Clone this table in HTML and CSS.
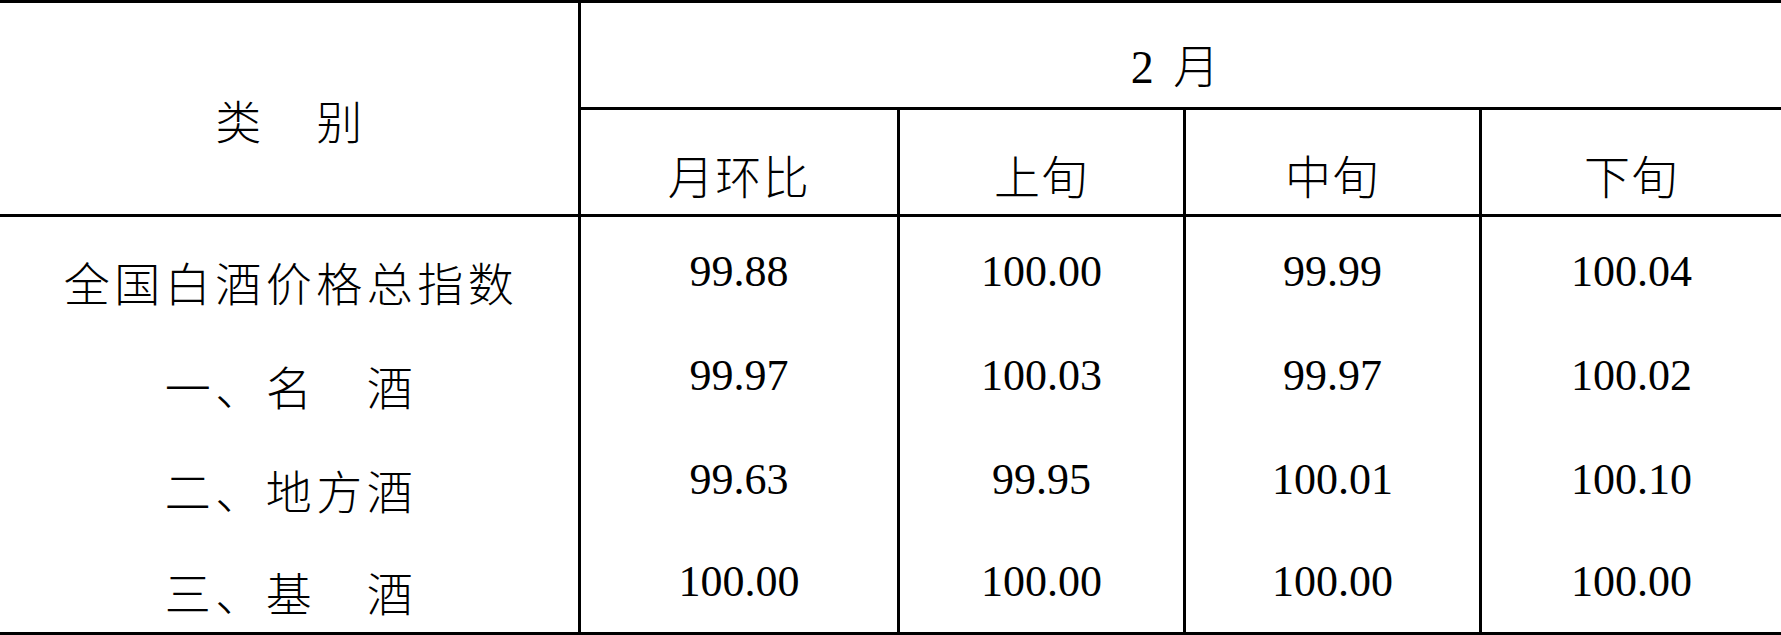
FILE: index.html
```html
<!DOCTYPE html>
<html lang="zh-CN">
<head>
<meta charset="utf-8">
<title>白酒价格指数</title>
<link rel="stylesheet" href="styles.css">
</head>
<body>
<div class="sheet">
  <div class="cell label head-cat">类　别</div>
  <div class="cell month">2 月</div>
  <div class="cell sub">月环比</div>
  <div class="cell sub">上旬</div>
  <div class="cell sub">中旬</div>
  <div class="cell sub last-col">下旬</div>

  <div class="cell label">全国白酒价格总指数</div>
  <div class="cell num">99.88</div>
  <div class="cell num">100.00</div>
  <div class="cell num">99.99</div>
  <div class="cell num last-col">100.04</div>

  <div class="cell label">一、名　酒</div>
  <div class="cell num">99.97</div>
  <div class="cell num">100.03</div>
  <div class="cell num">99.97</div>
  <div class="cell num last-col">100.02</div>

  <div class="cell label">二、地方酒</div>
  <div class="cell num">99.63</div>
  <div class="cell num">99.95</div>
  <div class="cell num">100.01</div>
  <div class="cell num last-col">100.10</div>

  <div class="cell label bottom">三、基　酒</div>
  <div class="cell num bottom">100.00</div>
  <div class="cell num bottom">100.00</div>
  <div class="cell num bottom">100.00</div>
  <div class="cell num bottom last-col">100.00</div>
</div>
</body>
</html>
```

FILE: styles.css
```css
html, body {
  margin: 0;
  padding: 0;
  background: #ffffff;
}

.sheet {
  width: 1781px;
  display: grid;
  grid-template-columns: 581px 319px 286px 296px 299px;
  grid-template-rows: 107px 107px 104px 104px 104px 106px;
  border-top: 3px solid #000;
  color: #000;
}

.cell {
  display: flex;
  align-items: center;
  justify-content: center;
  box-sizing: border-box;
  border-right: 3px solid #000;
  white-space: nowrap;
}

.last-col {
  border-right: none;
}

.label {
  font-family: "Noto Sans CJK SC", "Noto Sans CJK JP", sans-serif;
  font-weight: 300;
  font-size: 46px;
  line-height: 1;
  letter-spacing: 4.5px;
  padding-top: 24px;
  padding-left: 4px;
}

.head-cat {
  grid-row: 1 / span 2;
  border-bottom: 3px solid #000;
  padding-top: 20px;
}

.month {
  grid-column: 2 / span 4;
  border-right: none;
  border-bottom: 3px solid #000;
  font-family: "Liberation Serif", "Noto Sans CJK SC", serif;
  font-weight: 300;
  font-size: 46px;
  line-height: 1;
  word-spacing: 8px;
  padding-top: 26px;
  padding-right: 12px;
}

.sub {
  border-bottom: 3px solid #000;
  font-family: "Noto Sans CJK SC", "Noto Sans CJK JP", sans-serif;
  font-weight: 300;
  font-size: 46px;
  line-height: 1;
  letter-spacing: 1.5px;
  padding-top: 24px;
}

.num {
  font-family: "Liberation Serif", "Times New Roman", serif;
  font-size: 44px;
  line-height: 1;
  padding-top: 6px;
}

.bottom {
  border-bottom: 3px solid #000;
  padding-top: 3px;
}

.label.bottom {
  padding-top: 21px;
}
```
